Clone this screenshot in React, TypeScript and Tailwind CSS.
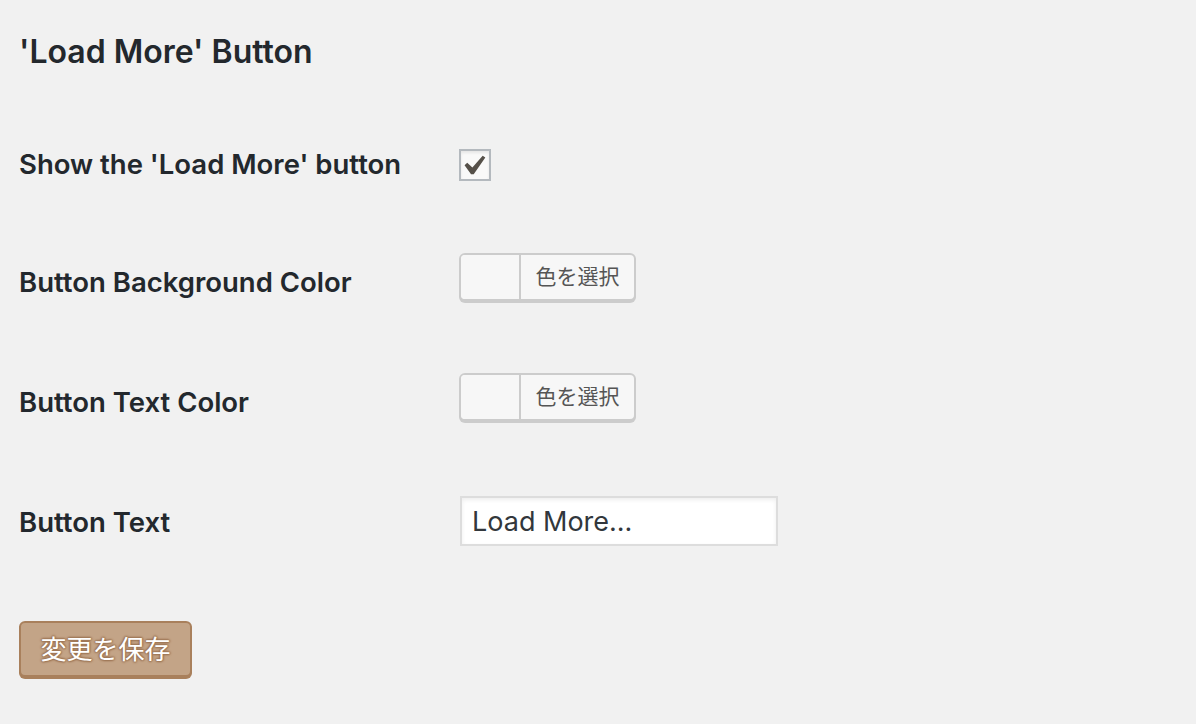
import React, { useState } from 'react';

const font = { fontFamily: 'Inter, "Noto Sans CJK JP", sans-serif' };

const labelCls = 'pt-[40px] text-[27.5px] font-semibold leading-[38px]';

const ColorPicker: React.FC = () => (
  <button
    type="button"
    className="flex h-[48px] w-[177px] items-stretch overflow-hidden rounded-[6px] border-2 border-[#cccccc] bg-[#f7f7f7] shadow-[0_2px_0_#cccccc]"
  >
    <span className="w-[60px] border-r-2 border-[#cccccc] bg-[#f7f7f7]" />
    <span className="flex flex-1 items-center justify-center text-[21px] text-[#555555]">色を選択</span>
  </button>
);

export default function App() {
  const [checked, setChecked] = useState(true);
  const [text, setText] = useState('Load More...');

  return (
    <div className="min-h-[724px] bg-[#f1f1f1] pl-[19px] pt-[33px] text-[#23282d]" style={font}>
      <h2 className="text-[32px] font-semibold leading-[38px]">'Load More' Button</h2>

      <div className="mt-[34px] grid grid-cols-[440px_1fr]">
        {/* row 1 */}
        <div className={`h-[118px] ${labelCls}`}>Show the 'Load More' button</div>
        <div className="pt-[44px]">
          <button
            type="button"
            onClick={() => setChecked(!checked)}
            className="flex h-[32px] w-[32px] items-center justify-center border-2 border-[#b4b9be] bg-[#f9f9f9] shadow-[inset_0_2px_3px_rgba(0,0,0,0.08)]"
          >
            {checked && (
              <svg width="22" height="20" viewBox="5.5 4.6 11 9.9">
                <path d="M14.83 4.89l1.34.94-5.81 8.38H9.02L5.78 9.67l1.34-1.25 2.57 2.4z" fill="#555049" />
              </svg>
            )}
          </button>
        </div>

        {/* row 2 */}
        <div className={`h-[120px] ${labelCls}`}>Button Background Color</div>
        <div className="pt-[30px]">
          <ColorPicker />
        </div>

        {/* row 3 */}
        <div className={`h-[120px] ${labelCls}`}>Button Text Color</div>
        <div className="pt-[30px]">
          <ColorPicker />
        </div>

        {/* row 4 */}
        <div className={`h-[120px] ${labelCls}`}>Button Text</div>
        <div className="pl-[1px] pt-[33px]">
          <input
            type="text"
            value={text}
            onChange={(e) => setText(e.target.value)}
            className="h-[50px] w-[318px] border-2 border-[#dddddd] bg-white px-[10px] text-[27px] text-[#32373c] shadow-[inset_0_2px_4px_rgba(0,0,0,0.07)] outline-none"
          />
        </div>
      </div>

      <button
        type="button"
        className="mt-[38px] h-[56px] w-[173px] rounded-[6px] border-2 border-[#a9805c] bg-[#c3a487] text-[26px] text-white shadow-[0_2px_0_#a9805c] [text-shadow:0_-1px_2px_#9c7352,1px_0_2px_#9c7352,0_1px_2px_#9c7352,-1px_0_2px_#9c7352]"
      >
        変更を保存
      </button>
    </div>
  );
}
